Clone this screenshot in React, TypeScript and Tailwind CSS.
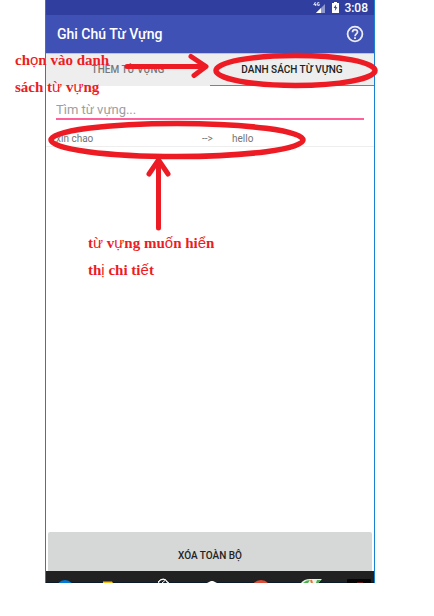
import type { ReactNode } from "react";

function StatusBar() {
  return (
    <div className="flex h-[15px] items-center justify-end bg-[#303f9f] pr-[6px] text-[12px] leading-[14px] font-medium text-white">
      <svg className="mr-[6px] h-[13px] w-[13px]" viewBox="0 0 13 13" aria-hidden="true">
        <path d="M3 12 L12 3 V12 Z" fill="#8f98cc" />
        <path d="M3 12 L8 7 V12 Z" fill="#fff" />
        <path d="M2.5 1 L0.7 3.7 H3.4 M2.7 2.5 V5 M6.3 1.7 Q4.2 0.8 4.2 3 Q4.2 5.2 6.3 4.4 V3.2 H5.4" fill="none" stroke="#fff" strokeWidth="0.8" />
      </svg>
      <svg className="mr-[5px] h-[11px] w-[7px]" viewBox="0 0 7 11" aria-hidden="true">
        <path d="M0 1 H2 V0 H5 V1 H7 V11 H0 Z" fill="#fff" />
        <path d="M4.2 2.5 L1.6 6 H3.3 L2.8 9 L5.4 5.3 H3.8 Z" fill="#303f9f" />
      </svg>
      <span>3:08</span>
    </div>
  );
}

function AppBar() {
  return (
    <header className="flex h-[38px] items-center justify-between bg-[#3f51b5] pr-[10px] pl-[11px] text-white">
      <h1 className="text-[14px] leading-[20px] font-medium">Ghi Chú Từ Vựng</h1>
      <button type="button" aria-label="Trợ giúp" className="h-[18px] w-[18px]">
        <svg viewBox="0 0 18 18" className="h-[18px] w-[18px]" fill="none" stroke="#ececf2" aria-hidden="true">
          <circle cx="9" cy="9" r="7.4" strokeWidth="1.8" />
          <path d="M6.5 7.3 C6.5 3.9 11.5 3.9 11.5 7 C11.5 8.8 9 8.9 9 11.2" strokeWidth="1.7" />
          <path d="M9 12.2 V13.9" strokeWidth="1.8" />
        </svg>
      </button>
    </header>
  );
}

function Tabs() {
  return (
    <div role="tablist" className="grid h-[33px] grid-cols-2 border-t border-[#c4c4c8] bg-[#eeeeee] text-[10px] leading-[14px] font-medium">
      <button type="button" role="tab" aria-selected="false" className="text-[#777777]">
        THÊM TỪ VỰNG
      </button>
      <button type="button" role="tab" aria-selected="true" className="flex flex-col text-[#212121]">
        <span className="flex w-full flex-1 items-center justify-center">DANH SÁCH TỪ VỰNG</span>
        <span className="h-px w-full bg-[#ff4081]" />
      </button>
    </div>
  );
}

const words = [{ word: "xin chao", meaning: "hello" }];

function WordList() {
  return (
    <ul>
      {words.map((w) => (
        <li key={w.word} className="flex h-[27px] items-center border-b border-[#eeeeee] px-[10px] pt-[12px] text-[10px] leading-[14px] text-[#757575]">
          <span className="w-[146px]">{w.word}</span>
          <span className="w-[30px]">--&gt;</span>
          <span>{w.meaning}</span>
        </li>
      ))}
    </ul>
  );
}

function NavBar() {
  return (
    <div className="h-[12px] overflow-hidden bg-[#212121]">
      <svg className="h-[12px] w-full" viewBox="0 0 328 12" preserveAspectRatio="xMinYMin" aria-hidden="true">
        <path d="M0 11.5 H328" stroke="#0a1a2a" />
        <circle cx="19" cy="18" r="9" fill="#0078d7" />
        <path d="M57 10.5 H66 L67 12 H57 Z" fill="#fcc21b" />
        <circle cx="117" cy="13" r="4.6" fill="none" stroke="#ddd" strokeWidth="1.2" />
        <path d="M112 11 L115 8.5 Q118 7.5 120 9 M116 12 L119 9.5 M120 10 L123 12" stroke="#fff" fill="none" />
        <path d="M161 12 L165 10 H167 L171 12 Z" fill="#fff" />
        <circle cx="215" cy="19" r="10" fill="#dd4b39" />
        <path d="M255 12 Q258 8 264 8 H276 L272 12 Z" fill="#e9f3e5" />
        <path d="M257 12 Q260 9 264 9 L262 12 Z M270 12 L271 9 H275 L272 12 Z" fill="#4caf50" />
        <path d="M265 9 L266 12" stroke="#ef6c35" strokeWidth="2" />
        <rect x="301" y="8" width="24" height="6" rx="1" fill="#050505" />
        <path d="M311 11.5 H317" stroke="#5e1111" />
      </svg>
    </div>
  );
}

/* The note face has no glyphs for stacked or dotted vowels, so those use a plain sans. */
function Sans({ children }: { children: ReactNode }) {
  return <span className="font-['Liberation_Sans',sans-serif] leading-none font-normal">{children}</span>;
}

const noteClass =
  "absolute font-['Liberation_Serif',serif] text-[15px] leading-[27px] font-bold whitespace-nowrap text-[#ed1c24]";

function Annotations() {
  return (
    <>
      <svg
        className="pointer-events-none absolute top-0 left-0 h-[240px] w-[400px]"
        viewBox="0 0 400 240"
        fill="none"
        stroke="#ed1c24"
        strokeWidth="5"
        strokeLinecap="round"
        strokeLinejoin="round"
        aria-hidden="true"
      >
        <ellipse cx="295.5" cy="70.5" rx="79.5" ry="15" strokeWidth="5.5" />
        <path d="M127 66.5 H205 M191 56.5 L206 66.5 L194 75.5" />
        <ellipse cx="177" cy="140" rx="126" ry="16.5" strokeWidth="5.5" />
        <path d="M158.5 228 V160 M149 174 L158.5 160 L168 174" />
      </svg>
      <p className={`${noteClass} top-[47px] left-[15px]`}>
        ch<Sans>ọ</Sans>n vào danh
        <br />
        sách t<Sans>ừ</Sans> v<Sans>ự</Sans>ng
      </p>
      <p className={`${noteClass} top-[230px] left-[88px]`}>
        t<Sans>ừ</Sans> v<Sans>ự</Sans>ng mu<Sans>ố</Sans>n hi<Sans>ể</Sans>n
        <br />
        th<Sans>ị</Sans> chi ti<Sans>ế</Sans>t
      </p>
    </>
  );
}

export default function App() {
  return (
    <div className="relative min-h-screen bg-white pr-[59px] pl-[45px] font-[Roboto,sans-serif]">
      <main className="flex min-h-[583px] flex-col border-x border-[#1a80d0] bg-white">
        <StatusBar />
        <AppBar />
        <Tabs />
        <div className="pt-[14px] pr-[10px] pl-[10px]">
          <input
            type="text"
            aria-label="Tìm từ vựng"
            placeholder="Tìm từ vựng..."
            className="block h-[20px] w-full border-b-2 border-[#ff6099] text-[13px] leading-[18px] outline-none placeholder:text-[#9e9e9e]"
          />
        </div>
        <WordList />
        <div className="mt-auto px-[2px]">
          <button
            type="button"
            className="h-[39px] w-full rounded-t-[2px] bg-[#d6d7d7] pt-[8px] text-[10px] leading-[14px] font-medium text-[#212121]"
          >
            XÓA TOÀN BỘ
          </button>
        </div>
        <NavBar />
      </main>
      <Annotations />
    </div>
  );
}
